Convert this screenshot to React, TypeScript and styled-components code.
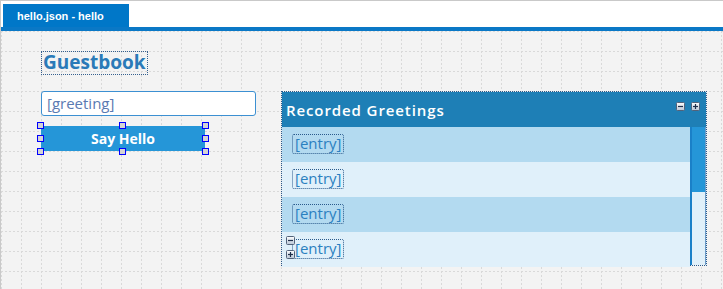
import styled, { createGlobalStyle } from "styled-components";

const GlobalStyle = createGlobalStyle`
  html, body { margin: 0; padding: 0; background: #fff; }
  body { font-family: "Open Sans", "DejaVu Sans", sans-serif; }
`;

const gridSvg =
  '<svg xmlns="http://www.w3.org/2000/svg" width="20" height="20">' +
  '<path d="M0.5 0V20M0 0.5H20" stroke="#d9d9d9" stroke-width="1" stroke-dasharray="2 2"/></svg>';

const gridTile = `url("data:image/svg+xml,${encodeURIComponent(gridSvg)}")`;

const entries = ["[entry]", "[entry]", "[entry]", "[entry]"];

function ToggleIcon({ plus }: { plus?: boolean }) {
  return (
    <svg width="9" height="9" viewBox="0 0 9 9">
      <defs>
        <linearGradient id={plus ? "gp" : "gm"} x1="0" y1="0" x2="0" y2="1">
          <stop offset="0" stopColor="#ffffff" />
          <stop offset="1" stopColor="#b9c6d6" />
        </linearGradient>
      </defs>
      <rect x="0.5" y="0.5" width="8" height="8" rx="1" fill={`url(#${plus ? "gp" : "gm"})`} stroke="#52627a" />
      <path d="M2 4.5H7" stroke="#1f2f4a" strokeWidth="1.2" />
      {plus && <path d="M4.5 2V7" stroke="#1f2f4a" strokeWidth="1.2" />}
    </svg>
  );
}

export default function App() {
  return (
    <>
      <GlobalStyle />
      <Frame>
        <TabBar>
          <Tab>hello.json - hello</Tab>
        </TabBar>
        <Rule />
        <Canvas>
          <LeftColumn>
            <Label>Guestbook</Label>
            <Input>[greeting]</Input>
            <ButtonWrap>
              <SayButton>Say Hello</SayButton>
              <Handle $x="left" $y="top" />
              <Handle $x="mid" $y="top" />
              <Handle $x="right" $y="top" />
              <Handle $x="left" $y="mid" />
              <Handle $x="right" $y="mid" />
              <Handle $x="left" $y="bottom" />
              <Handle $x="mid" $y="bottom" />
              <Handle $x="right" $y="bottom" />
            </ButtonWrap>
          </LeftColumn>
          <Panel>
            <PanelHeader>
              <PanelTitle>Recorded Greetings</PanelTitle>
              <HeaderTools>
                <ToggleIcon />
                <ToggleIcon plus />
              </HeaderTools>
            </PanelHeader>
            <PanelBody>
              <List>
                {entries.map((e, i) => (
                  <Row key={i} $alt={i % 2 === 1}>
                    <Entry>{e}</Entry>
                    {i === entries.length - 1 && (
                      <RowTools>
                        <ToggleIcon />
                        <ToggleIcon plus />
                      </RowTools>
                    )}
                  </Row>
                ))}
              </List>
              <Scrollbar>
                <Thumb />
              </Scrollbar>
            </PanelBody>
          </Panel>
        </Canvas>
      </Frame>
    </>
  );
}

const Frame = styled.div`
  width: 723px;
  height: 289px;
  box-sizing: border-box;
  border-top: 1px solid #c9c9c9;
  border-left: 1px solid #c9c9c9;
  display: flex;
  flex-direction: column;
  overflow: hidden;
`;

const TabBar = styled.div`
  height: 26px;
  box-sizing: border-box;
  padding: 3px 0 0 2px;
  background: #fff;
  display: flex;
`;

const Tab = styled.div`
  width: 126px;
  height: 23px;
  box-sizing: border-box;
  padding-left: 14px;
  background: #0077c8;
  color: #fff;
  font-family: "Liberation Sans", Arial, sans-serif;
  font-weight: bold;
  font-size: 11px;
  line-height: 24px;
`;

const Rule = styled.div`
  height: 4px;
  background: #0a78c6;
`;

const Canvas = styled.div`
  flex: 1;
  background-color: #f3f3f3;
  background-image: ${gridTile};
  padding: 20px 0 0 40px;
  display: flex;
  align-items: flex-start;
`;

const LeftColumn = styled.div`
  width: 215px;
  display: flex;
  flex-direction: column;
`;

const Label = styled.div`
  align-self: flex-start;
  height: 24px;
  box-sizing: border-box;
  border: 1px dotted #35608f;
  padding: 0 1px;
  color: #2a7ab8;
  font-weight: 700;
  font-size: 19px;
  line-height: 21px;
`;

const Input = styled.div`
  margin-top: 16px;
  height: 25px;
  box-sizing: border-box;
  border: 1px solid #3c90d2;
  border-radius: 3px;
  background: #fff;
  padding-left: 5px;
  color: #5a7ab2;
  font-size: 15px;
  line-height: 22px;
`;

const ButtonWrap = styled.div`
  position: relative;
  margin-top: 10px;
  width: 164px;
  height: 25px;
`;

const SayButton = styled.div`
  height: 100%;
  background: #2596d8;
  color: #fff;
  font-weight: 700;
  font-size: 14px;
  line-height: 25px;
  text-align: center;
`;

const handleX = { left: "-4px", mid: "calc(50% - 4px)", right: "calc(100% - 3px)" };
const handleY = { top: "-4px", mid: "calc(50% - 4px)", bottom: "calc(100% - 3px)" };

const Handle = styled.span<{ $x: "left" | "mid" | "right"; $y: "top" | "mid" | "bottom" }>`
  position: absolute;
  left: ${(p) => handleX[p.$x]};
  top: ${(p) => handleY[p.$y]};
  width: 7px;
  height: 7px;
  box-sizing: border-box;
  border: 1px solid #0000ff;
  background: #d4d4d4;
`;

const Panel = styled.div`
  margin: 40px 0 0 25px;
  width: 426px;
  height: 175px;
  box-sizing: border-box;
  border: 1px dotted #2a5a8c;
  display: flex;
  flex-direction: column;
`;

const PanelHeader = styled.div`
  height: 35px;
  flex: none;
  background: #1e7fb6;
  display: flex;
  align-items: center;
  justify-content: space-between;
  padding: 0 6px 0 4px;
`;

const PanelTitle = styled.div`
  color: #fff;
  font-weight: 600;
  font-size: 15px;
  letter-spacing: 0.9px;
  margin-top: 1px;
`;

const HeaderTools = styled.div`
  display: flex;
  gap: 6px;
  margin-top: -6px;
`;

const PanelBody = styled.div`
  flex: 1;
  display: flex;
  min-height: 0;
`;

const List = styled.div`
  flex: 1;
  display: flex;
  flex-direction: column;
`;

const Row = styled.div<{ $alt: boolean }>`
  position: relative;
  height: 35px;
  flex: none;
  box-sizing: border-box;
  padding: 5px 0 0 10px;
  background: ${(p) => (p.$alt ? "#e0f0fa" : "#b3daf0")};
`;

const Entry = styled.div`
  display: inline-block;
  height: 20px;
  box-sizing: border-box;
  border: 1px dotted #2a5a8c;
  border-radius: 2px;
  padding: 0 2px;
  color: #2a80c0;
  font-size: 15px;
  line-height: 17px;
`;

const RowTools = styled.div`
  position: absolute;
  left: 4px;
  top: 4px;
  display: flex;
  flex-direction: column;
  gap: 5px;
`;

const Scrollbar = styled.div`
  width: 16px;
  flex: none;
  box-sizing: border-box;
  border-left: 2px solid #1a80c8;
  border-right: 1px solid #6a9ac8;
  background: #e0f0fa;
`;

const Thumb = styled.div`
  height: 65px;
  background: #2596d8;
`;
